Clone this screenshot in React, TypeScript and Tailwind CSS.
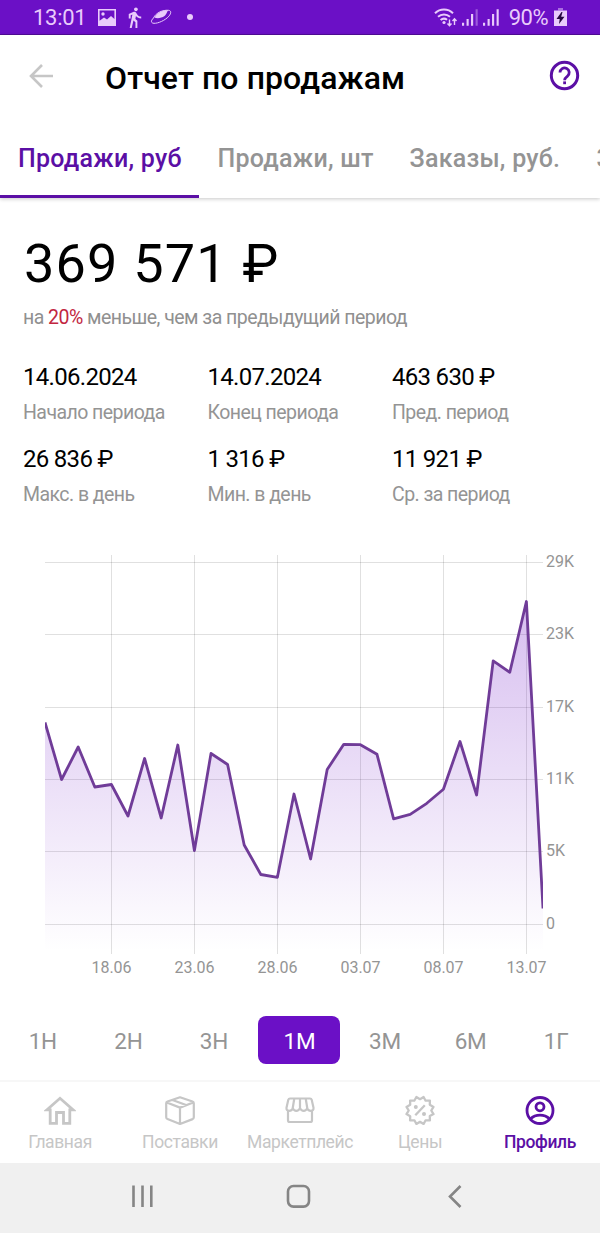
import { MdDirectionsWalk } from "react-icons/md";

const tabs = [
  { label: "Продажи, руб", className: "ml-[18px] w-[199.5px] text-[#5b0fa5]" },
  { label: "Продажи, шт", className: "w-[192px] text-[#949494]" },
  { label: "Заказы, руб.", className: "w-[187px] text-[#949494]" },
  { label: "З", className: "text-[#949494]" },
];

const stats = [
  { value: "14.06.2024", label: "Начало периода" },
  { value: "14.07.2024", label: "Конец периода" },
  { value: "463 630 ₽", label: "Пред. период" },
  { value: "26 836 ₽", label: "Макс. в день" },
  { value: "1 316 ₽", label: "Мин. в день" },
  { value: "11 921 ₽", label: "Ср. за период" },
];

const periods = ["1Н", "2Н", "3Н", "1М", "3М", "6М", "1Г"];

// chart is 600x442, one point per day
const X0 = 45;
const STEP = 16.6;
const points = [
  182.5, 239.5, 207, 247, 244.5, 276, 218.5, 278, 205, 310.5, 213.5, 224.5,
  305, 334.5, 337.3, 254, 319, 229.5, 204.3, 204.7, 214.3, 278.8, 274.3, 263.3,
  249.3, 201.5, 255, 120.8, 132.3, 61.5, 368.5,
];

const rows = [
  { y: 22.5, label: "29K" },
  { y: 94.5, label: "23K" },
  { y: 167.5, label: "17K" },
  { y: 239.5, label: "11K" },
  { y: 311.5, label: "5K" },
  { y: 384.5, label: "0" },
];

const columns = [
  { x: 111.5, label: "18.06" },
  { x: 194.5, label: "23.06" },
  { x: 277.5, label: "28.06" },
  { x: 360.5, label: "03.07" },
  { x: 443.5, label: "08.07" },
  { x: 526.5, label: "13.07" },
];

const nav = [
  { label: "Главная", icon: <HomeIcon /> },
  { label: "Поставки", icon: <BoxIcon /> },
  { label: "Маркетплейс", icon: <StoreIcon /> },
  { label: "Цены", icon: <PercentIcon /> },
  { label: "Профиль", icon: <ProfileIcon />, active: true },
];

export default function App() {
  return (
    <div className="flex h-[1233px] w-[600px] flex-col overflow-hidden bg-white font-['Roboto',sans-serif] text-black">
      <StatusBar />

      <div className="h-[163px] shrink-0 shadow-[0_1px_4px_rgba(0,0,0,0.22)]">
        <header className="flex h-[109px] items-start pt-[23px]">
          <svg className="mt-[6px] ml-[29px] h-6 w-6" viewBox="0 0 24 24" fill="none" stroke="#c6c6c6" strokeWidth="2.6">
            <path d="M24 12H3M13 1 2 12l11 11" />
          </svg>
          <h1 className="ml-[52px] text-[32px] leading-[40px] font-medium tracking-[0.1px] whitespace-nowrap">
            Отчет по продажам
          </h1>
          <svg className="mt-[2px] mr-[20px] ml-auto h-[31px] w-[31px]" viewBox="0 0 31 31" fill="none" stroke="#5b0fa5" strokeWidth="3">
            <circle cx="15.5" cy="15.5" r="13.2" />
            <path d="M11 12.6a4.6 4.6 0 1 1 7.3 3.7c-1.7 1.3-2.7 1.9-2.7 4" strokeWidth="2.8" />
            <path d="M14.2 21.4h2.8v2.8h-2.8z" fill="#5b0fa5" stroke="none" />
          </svg>
        </header>

        <nav>
          <div className="flex h-[51px] overflow-hidden text-[25px] leading-[30px] font-medium tracking-[0.25px] whitespace-nowrap">
            {tabs.map((tab) => (
              <div key={tab.label} className={`shrink-0 ${tab.className}`}>
                {tab.label}
              </div>
            ))}
          </div>
          <div className="h-[3px] w-[199px] bg-[#5b0fa5]" />
        </nav>
      </div>

      <main className="flex flex-1 flex-col">
        <div className="pt-[34px] pl-[23px]">
          <p className="ml-px text-[54px] leading-[64px] tracking-[1.2px]">369 571 ₽</p>
          <p className="mt-[10px] text-[19.5px] leading-6 tracking-[-0.53px] text-[#909090]">
            на <span className="text-[#c2263f]">20%</span> меньше, чем за предыдущий период
          </p>
          <div className="mt-[32px] grid grid-cols-[184.5px_184.5px_1fr] gap-y-[19px]">
            {stats.map((s) => (
              <div key={s.label}>
                <p className="text-[24px] leading-[30px] tracking-[-0.7px]">{s.value}</p>
                <p className="mt-[9px] text-[19.5px] leading-6 tracking-[-0.55px] text-[#949494]">{s.label}</p>
              </div>
            ))}
          </div>
        </div>
        <SalesChart />
      </main>

      <div className="grid h-[91px] w-[599px] shrink-0 grid-cols-7 items-start justify-items-center pt-[27px]">
        {periods.map((p) => (
          <div
            key={p}
            className={`flex h-12 w-[82px] items-center justify-center rounded-[8px] pt-[3px] text-[22.5px] tracking-[-0.2px] ${
              p === "1М" ? "bg-[#6b10c6] text-white" : "text-[#949494]"
            }`}
          >
            {p}
          </div>
        ))}
      </div>

      <nav className="grid h-[83px] shrink-0 grid-cols-5 border-t-2 border-[#f7f7f7] pt-[13px]">
        {nav.map((item) => (
          <div
            key={item.label}
            className={`flex flex-col items-center text-[17.5px] leading-5 tracking-[-0.4px] whitespace-nowrap ${
              item.active ? "font-medium text-[#5b0fa5]" : "text-[#c6c6c6]"
            }`}
          >
            {item.icon}
            <span className="mt-[7px]">{item.label}</span>
          </div>
        ))}
      </nav>

      <footer className="h-[70px] shrink-0 bg-[#f0f0f0]">
        <svg width="600" height="70" fill="none" stroke="#858585" strokeWidth="2.6">
          <path d="M133.5 22.5v21.5M142.5 22.5v21.5M151.3 22.5v21.5" />
          <rect x="288" y="23" width="21" height="20.6" rx="5.5" />
          <path d="m460.5 23-10.5 10.5 10.5 10.5" />
        </svg>
      </footer>
    </div>
  );
}

function StatusBar() {
  return (
    <div className="flex h-[35px] shrink-0 items-center border-b border-[#520c98] bg-[#6b10c6] text-[#e9cbfb]">
      <span className="ml-[33px] w-[65px] pt-[2px] text-[22px] leading-[32px] tracking-[-0.3px]">13:01</span>
      <svg className="h-[17px] w-[18px]" viewBox="0 0 18 17" fill="currentColor">
        <path fillRule="evenodd" d="M0 0h18v17H0zM1.6 1.6v10.2L6 8.5l3 2L13 7l3.4 3V1.6z" />
        <circle cx="5" cy="5" r="1.7" />
      </svg>
      <MdDirectionsWalk className="ml-[7px] h-[23px] w-[23px]" />
      <svg className="ml-[4px] h-[16px] w-[22px]" viewBox="0 0 22 16">
        <path
          d="M3.5 9C6 3.5 13 .8 18.5 1.3c3 .3 2.8 3 .3 6C15 11.5 8 14.5 4 14.3c-3-.1-3.6-2.3-.5-5.3z"
          fill="none"
          stroke="currentColor"
          strokeWidth="1"
        />
        <path d="M4.5 8.5C7.5 3.5 13 1 18.5 1.3c-1.8 1-1.3 3.7-4 5.7-3 2.2-7.5 2.7-10 1.5z" fill="currentColor" />
      </svg>
      <span className="ml-[15px] h-[6px] w-[6px] rounded-full bg-current" />

      <svg className="ml-auto h-[20px] w-[24px]" viewBox="0 0 24 20" fill="none" stroke="currentColor" strokeWidth="2">
        <path d="M1 6.2a13 13 0 0 1 18 0M4 9.8a9 9 0 0 1 12 0M6.6 13a5.2 5.2 0 0 1 6.5-.2" />
        <circle cx="10" cy="15.5" r="1.6" fill="currentColor" stroke="none" />
        <path d="M15.5 12.5v6m-2-2 2 2.2 2-2.2M20.5 18v-6m-2 2 2-2.2 2 2.2" strokeWidth="1.4" />
      </svg>
      <Signal className="ml-[4px]" weak />
      <Signal className="ml-[5px]" />
      <span className="ml-[9px] pt-[2px] text-[22px] leading-[32px] tracking-[-0.5px]">90%</span>
      <svg className="mr-[33px] ml-[6px] h-[18px] w-[13px]" viewBox="0 0 13 18">
        <path d="M0 2.5h13V18H0z" fill="currentColor" />
        <path d="M4 0h5v2.5H4z" fill="currentColor" opacity="0.5" />
        <path d="M7.5 4 2.5 11h3.2L5 16l5.5-7.2H7.2L8.5 4z" fill="#26083f" />
      </svg>
    </div>
  );
}

function Signal({ className, weak }: { className: string; weak?: boolean }) {
  return (
    <svg className={`h-[17px] w-[16.5px] ${className}`} viewBox="0 0 17 17" fill="currentColor">
      <path d="M0 14h2.2v3H0zM4.7 10h2.2v7H4.7zM9.3 5h2.2v12H9.3z" />
      <path d="M14 0h2.2v17H14z" opacity={weak ? 0.4 : 1} />
    </svg>
  );
}

function SalesChart() {
  const line = points.map((y, i) => `${(X0 + i * STEP).toFixed(1)},${y}`).join(" ");

  return (
    <svg className="mt-[33px] block shrink-0" width="600" height="442" viewBox="0 0 600 442">
      <defs>
        <linearGradient id="area" gradientUnits="userSpaceOnUse" x1="0" y1="50" x2="0" y2="412">
          <stop offset="0" stopColor="#6b10c6" stopOpacity="0.28" />
          <stop offset="1" stopColor="#6b10c6" stopOpacity="0" />
        </linearGradient>
        <clipPath id="plot">
          <rect x="45" y="0" width="498" height="442" />
        </clipPath>
      </defs>
      <g stroke="#000" strokeOpacity="0.12">
        {rows.map((r) => (
          <line key={r.y} x1="45" x2="543" y1={r.y} y2={r.y} />
        ))}
        {columns.map((c) => (
          <line key={c.x} x1={c.x} x2={c.x} y1="15" y2="414" />
        ))}
      </g>
      <g clipPath="url(#plot)">
        <polygon points={`45,412 ${line} 543,412`} fill="url(#area)" />
        <polyline points={line} fill="none" stroke="#703c98" strokeWidth="2.8" strokeLinejoin="round" />
      </g>
      <g fill="#949494" fontSize="16">
        {rows.map((r) => (
          <text key={r.label} x="546" y={r.y + 4.5}>
            {r.label}
          </text>
        ))}
        {columns.map((c) => (
          <text key={c.label} x={c.x} y="432.5" textAnchor="middle">
            {c.label}
          </text>
        ))}
      </g>
    </svg>
  );
}

function HomeIcon() {
  return (
    <svg width="32" height="30" viewBox="0 0 32 30" fill="none" stroke="currentColor" strokeWidth="2.8">
      <path d="M3 14.8 16 3.3l13 11.5h-3.2v13.5h-6.3V17.5h-7v10.8H6.2V14.8z" />
    </svg>
  );
}

function BoxIcon() {
  return (
    <svg width="30" height="30" viewBox="0 0 30 30" fill="none" stroke="currentColor" strokeWidth="2.2" strokeLinejoin="round">
      <path d="M15 2.3 27.5 6.5q1.3.5 1.3 1.8v14q0 1.3-1.2 1.8L15 29 2.5 24.1q-1.3-.5-1.3-1.8v-14q0-1.3 1.3-1.8zM1.8 7.5 15 12.6l13.2-5.1M15 12.6V29M7.5 5l13.5 5" />
    </svg>
  );
}

function StoreIcon() {
  return (
    <svg width="30" height="30" viewBox="0 0 30 30" fill="none" stroke="currentColor" strokeWidth="2.2" strokeLinejoin="round">
      <path d="M5 3.5h20q1.3 0 1.7 1.3l1.8 8q.3 3-2.7 3-2.5 0-3.5-2.5-1.2 2.5-3.6 2.5-2.5 0-3.7-2.5-1.2 2.5-3.7 2.5-2.4 0-3.6-2.5-1 2.5-3.5 2.5-3 0-2.7-3l1.8-8Q3.7 3.5 5 3.5zM9.3 3.5l-1.6 9.8M15 3.5v9.8M20.7 3.5l1.6 9.8M3 15.5v9.7q0 1.8 1.8 1.8h20.4q1.8 0 1.8-1.8v-9.7" />
    </svg>
  );
}

function PercentIcon() {
  const star = Array.from({ length: 24 }, (_, i) => {
    const r = i % 2 ? 14 : 11.3;
    const a = (i * Math.PI) / 12;
    return `${(15 + r * Math.sin(a)).toFixed(1)},${(15.5 - r * Math.cos(a)).toFixed(1)}`;
  }).join(" ");

  return (
    <svg width="30" height="30" viewBox="0 0 30 30" fill="none" stroke="currentColor" strokeWidth="2.3" strokeLinejoin="round">
      <polygon points={star} />
      <path d="m10.3 20.3 9.5-10" />
      <circle cx="10.8" cy="12" r="2" fill="currentColor" stroke="none" />
      <circle cx="19" cy="19" r="2" fill="currentColor" stroke="none" />
    </svg>
  );
}

function ProfileIcon() {
  return (
    <svg width="30" height="30" viewBox="0 0 30 30" fill="none" stroke="currentColor" strokeWidth="2.8">
      <circle cx="15" cy="15.5" r="13" />
      <circle cx="15" cy="11.8" r="4" />
      <path d="M5.5 23.8c5-5 14-5 19 0" />
    </svg>
  );
}
